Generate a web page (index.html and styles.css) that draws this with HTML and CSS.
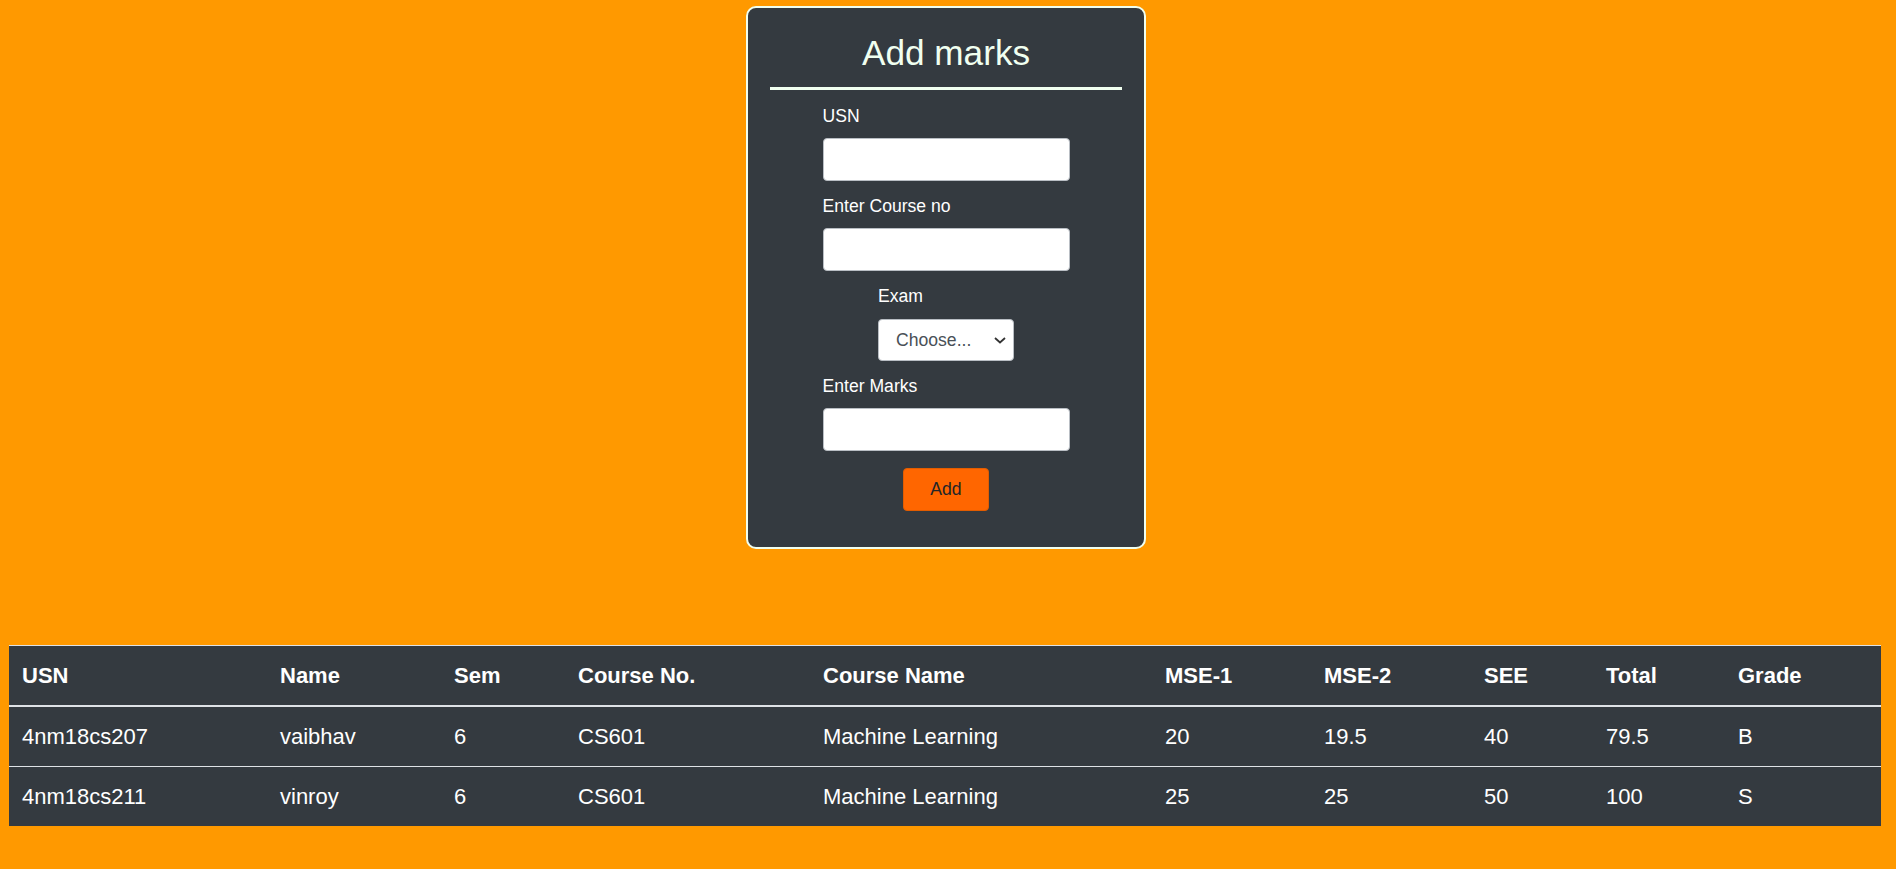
FILE: index.html
```html
<!DOCTYPE html>
<html lang="en">
<head>
<meta charset="utf-8">
<title>Add marks</title>
<link rel="stylesheet" href="styles.css">
</head>
<body>
<div class="page">
  <form class="card">
    <h2 class="card-title">Add marks</h2>
    <hr class="divider">
    <div class="fields">
      <div class="group">
        <label class="lbl">USN</label>
        <input class="field" type="text">
      </div>
      <div class="group">
        <label class="lbl">Enter Course no</label>
        <input class="field" type="text">
      </div>
      <div class="group group-select">
        <label class="lbl">Exam</label>
        <div class="select-wrap">
          <select class="select">
            <option>Choose...</option>
            <option>MSE-1</option>
            <option>MSE-2</option>
            <option>SEE</option>
          </select>
          <svg class="chev" width="12" height="7" viewBox="0 0 12 7"><path d="M1 1 L6 5.5 L11 1" fill="none" stroke="#333" stroke-width="1.8"/></svg>
        </div>
      </div>
      <div class="group">
        <label class="lbl">Enter Marks</label>
        <input class="field" type="text">
      </div>
      <button class="btn" type="button">Add</button>
    </div>
  </form>

  <table class="marks">
    <thead>
      <tr><th>USN</th><th>Name</th><th>Sem</th><th>Course No.</th><th>Course Name</th><th>MSE-1</th><th>MSE-2</th><th>SEE</th><th>Total</th><th>Grade</th></tr>
    </thead>
    <tbody>
      <tr><td>4nm18cs207</td><td>vaibhav</td><td>6</td><td>CS601</td><td>Machine Learning</td><td>20</td><td>19.5</td><td>40</td><td>79.5</td><td>B</td></tr>
      <tr><td>4nm18cs211</td><td>vinroy</td><td>6</td><td>CS601</td><td>Machine Learning</td><td>25</td><td>25</td><td>50</td><td>100</td><td>S</td></tr>
    </tbody>
  </table>
</div>
</body>
</html>
```
FILE: styles.css
```css
html, body {
  margin: 0;
  padding: 0;
}
body {
  background: #ff9900;
  font-family: "Liberation Sans", Arial, sans-serif;
  height: 869px;
  overflow: hidden;
}
.page {
  padding: 6px 15px 0 9px;
}
.card {
  width: 396px;
  margin: 0 auto 0 737px;
  background: #343a40;
  border: 2px solid #f0fff0;
  border-radius: 10px;
  padding: 24px 0 36px;
  box-sizing: content-box;
}
.card-title {
  margin: 0;
  text-align: center;
  font-weight: 400;
  font-size: 35.2px;
  line-height: 42px;
  color: #f0fff0;
}
.divider {
  margin: 13px 22px 0;
  border: 0;
  border-top: 3px solid #f0fff0;
  height: 0;
}
.fields {
  display: flex;
  flex-direction: column;
  align-items: center;
  padding-top: 13px;
}
.group {
  width: 247px;
  display: flex;
  flex-direction: column;
  margin-bottom: 12px;
}
.group-select {
  width: 136px;
}
.lbl {
  font-size: 17.6px;
  line-height: 26px;
  color: #ffffff;
  margin-bottom: 9px;
}
.field {
  box-sizing: border-box;
  width: 247px;
  height: 43px;
  margin: 0;
  background: #fff;
  border: 1px solid #b9bec4;
  border-radius: 4px;
  font-family: inherit;
  font-size: 17.6px;
}
.select-wrap {
  position: relative;
  width: 136px;
  height: 42px;
  margin-top: 1px;
}
.select {
  -webkit-appearance: none;
  appearance: none;
  box-sizing: border-box;
  width: 136px;
  height: 42px;
  margin: 0;
  padding: 0 24px 0 17px;
  background: #fff;
  border: 1px solid #b9bec4;
  border-radius: 4px;
  font-family: inherit;
  font-size: 17.6px;
  color: #495057;
}
.chev {
  position: absolute;
  right: 8px;
  top: 18px;
  pointer-events: none;
}
.btn {
  margin-top: 5px;
  width: 86px;
  height: 43px;
  background: #ff6600;
  border: 1px solid #e25c00;
  border-radius: 4px;
  font-family: inherit;
  font-size: 17.6px;
  color: #212529;
  padding: 0;
}
.marks {
  margin-top: 96px;
  width: 1872px;
  table-layout: fixed;
  border-collapse: collapse;
  background: #343a40;
  color: #ffffff;
  font-size: 22px;
  line-height: 33px;
}
.marks th, .marks td {
  text-align: left;
  padding: 13px 13px;
  border-top: 1px solid #dee2e6;
  white-space: nowrap;
}
.marks th {
  font-weight: 700;
  border-bottom: 2px solid #dee2e6;
}
.marks thead tr th { border-top: 1px solid #dee2e6; }
.marks tbody tr:first-child td { border-top: 0; }
.marks th:nth-child(1) { width: 232px; }
.marks th:nth-child(2) { width: 148px; }
.marks th:nth-child(3) { width: 98px; }
.marks th:nth-child(4) { width: 219px; }
.marks th:nth-child(5) { width: 316px; }
.marks th:nth-child(6) { width: 133px; }
.marks th:nth-child(7) { width: 134px; }
.marks th:nth-child(8) { width: 96px; }
.marks th:nth-child(9) { width: 106px; }
.marks th:nth-child(10) { width: 130px; }
```
